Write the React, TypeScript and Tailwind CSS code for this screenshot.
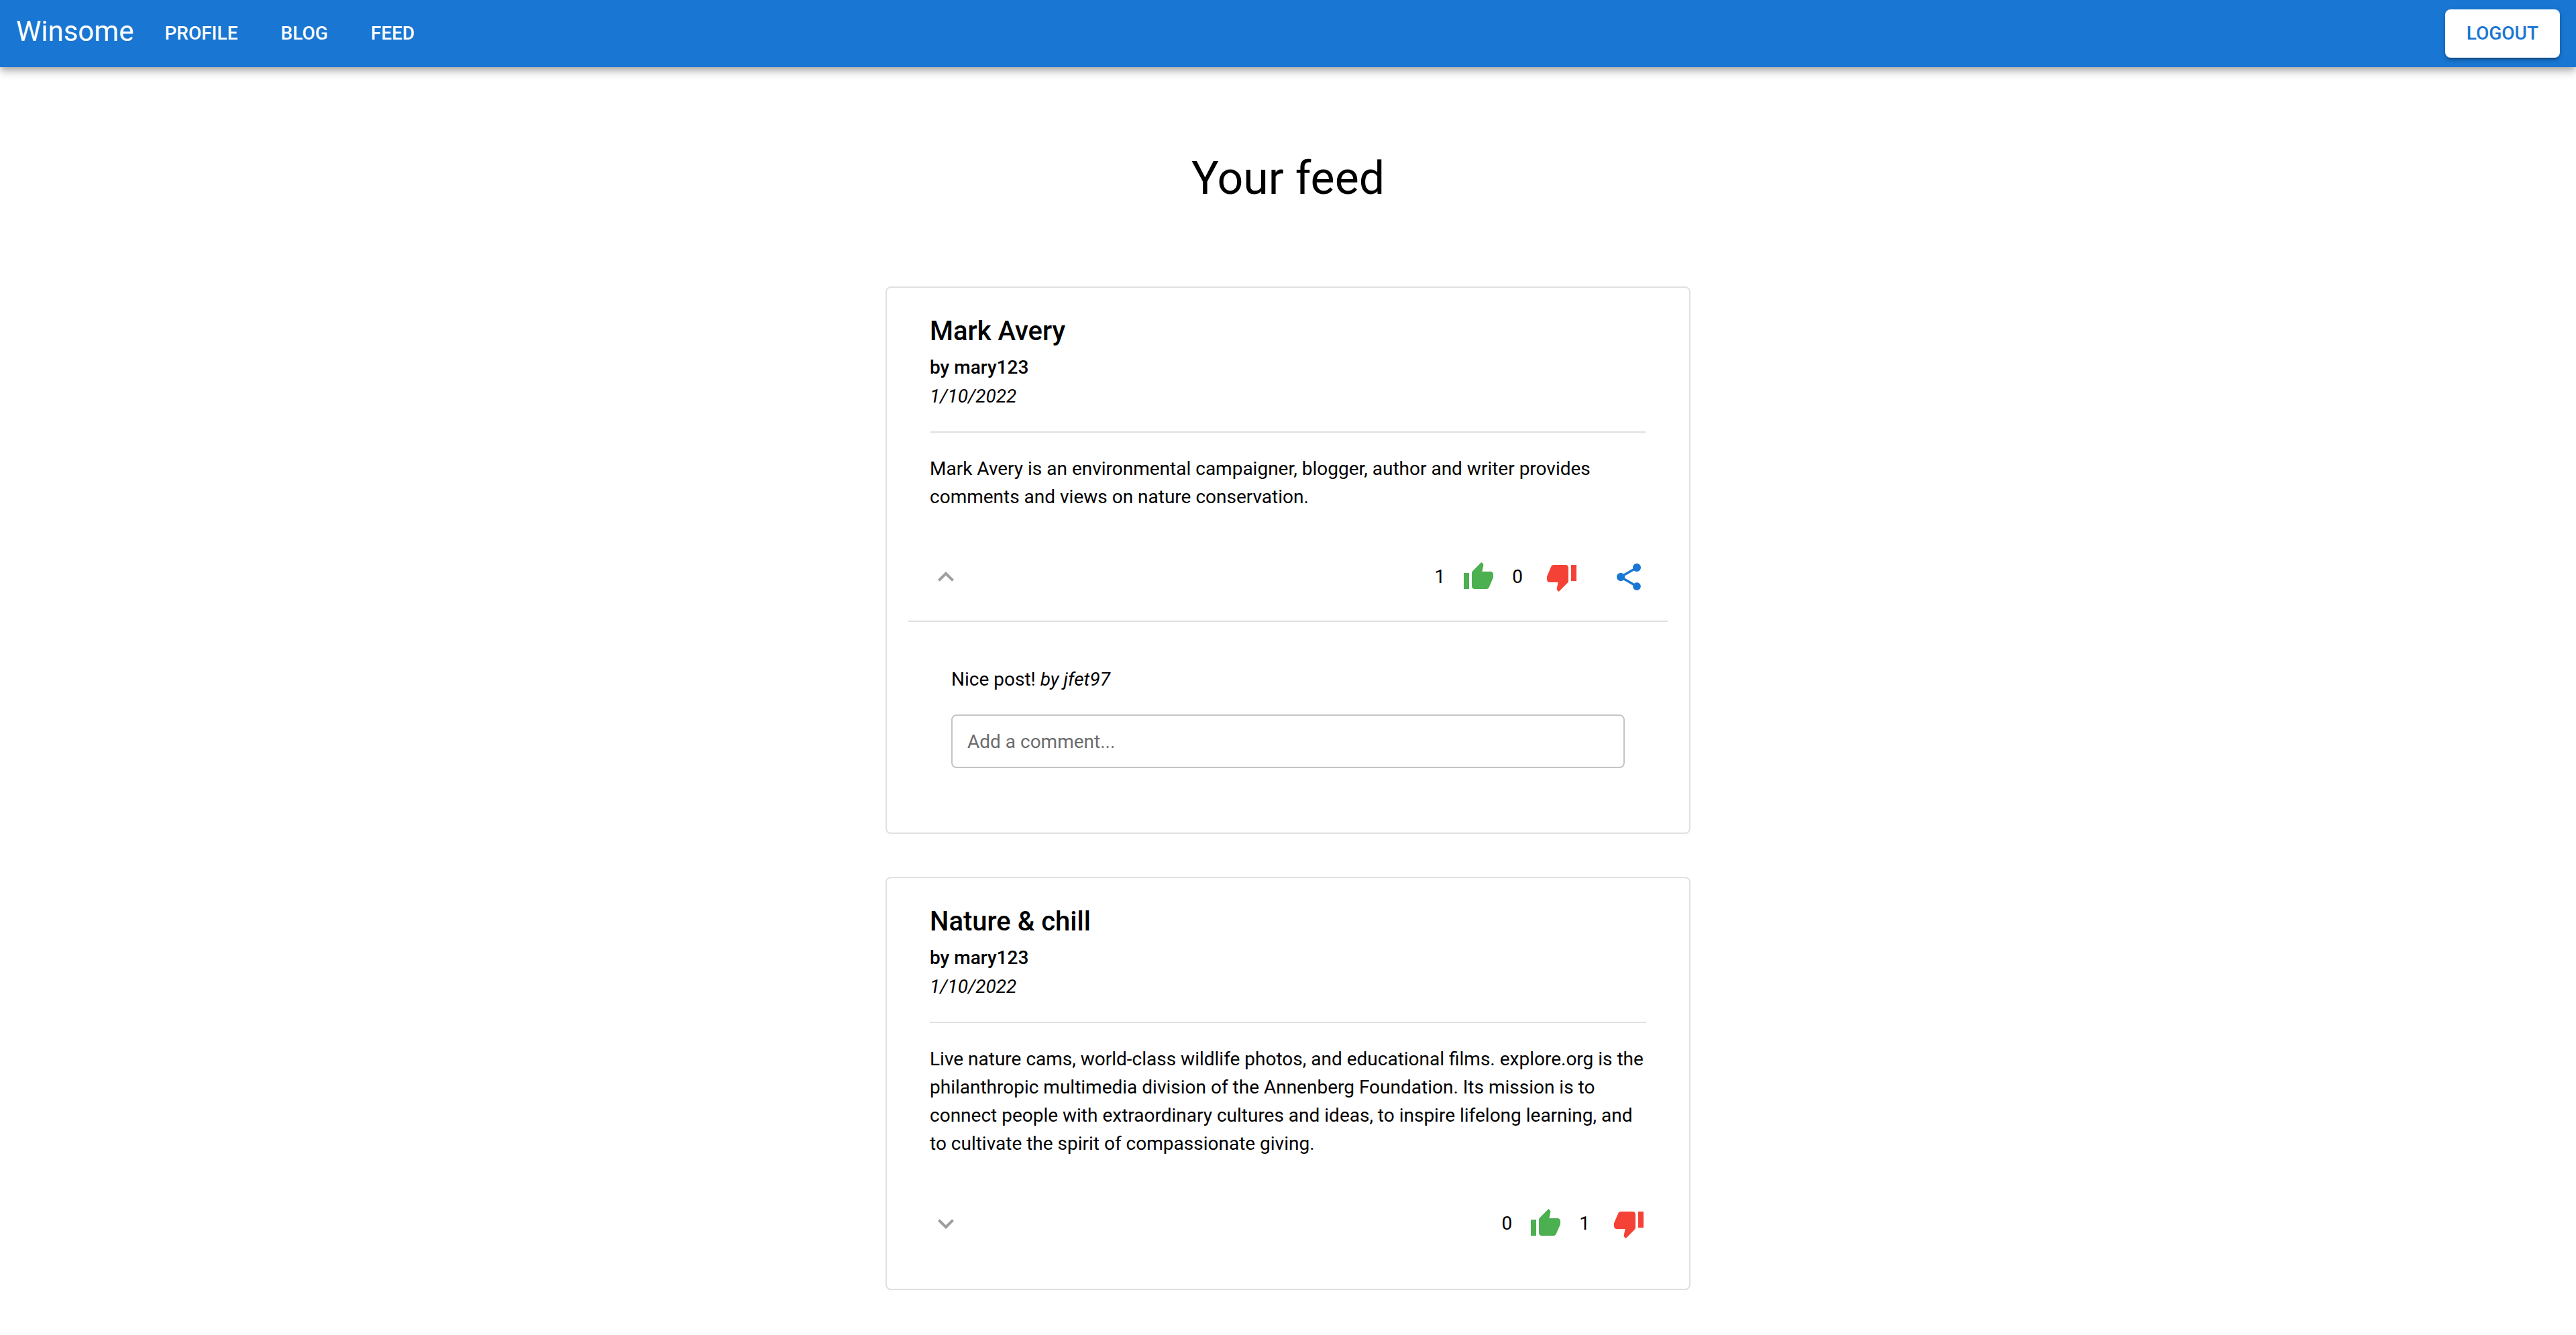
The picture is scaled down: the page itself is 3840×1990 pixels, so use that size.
import { useState } from "react";
import { MdExpandLess, MdExpandMore, MdShare, MdThumbDown, MdThumbUp } from "react-icons/md";

type Comment = { text: string; author: string };

type Post = {
  id: number;
  title: string;
  author: string;
  date: string;
  body: string;
  up: number;
  down: number;
  shareable: boolean;
  expanded: boolean;
  comments: Comment[];
};

const posts: Post[] = [
  {
    id: 1,
    title: "Mark Avery",
    author: "mary123",
    date: "1/10/2022",
    body: "Mark Avery is an environmental campaigner, blogger, author and writer provides comments and views on nature conservation.",
    up: 1,
    down: 0,
    shareable: true,
    expanded: true,
    comments: [{ text: "Nice post!", author: "jfet97" }],
  },
  {
    id: 2,
    title: "Nature & chill",
    author: "mary123",
    date: "1/10/2022",
    body: "Live nature cams, world-class wildlife photos, and educational films. explore.org is the philanthropic multimedia division of the Annenberg Foundation. Its mission is to connect people with extraordinary cultures and ideas, to inspire lifelong learning, and to cultivate the spirit of compassionate giving.",
    up: 0,
    down: 1,
    shareable: false,
    expanded: false,
    comments: [],
  },
];

const links = ["Profile", "Blog", "Feed"];

function NavBar() {
  return (
    <header className="flex items-start bg-[#1976d2] px-6 py-[14px] text-white shadow-[0_4px_8px_-2px_rgba(0,0,0,0.2),0_8px_10px_0_rgba(0,0,0,0.14),0_2px_20px_0_rgba(0,0,0,0.12)]">
      <span className="mr-[14px] text-[42px] leading-[66px]">Winsome</span>
      <nav className="flex grow">
        {links.map((link) => (
          <a
            key={link}
            href={`#${link.toLowerCase()}`}
            className="flex h-[72px] items-center px-8 text-[28px] font-medium uppercase"
          >
            {link}
          </a>
        ))}
      </nav>
      <button
        type="button"
        className="h-[72px] rounded-lg bg-white px-8 text-[28px] font-medium text-[#1976d2] uppercase shadow-[0_6px_2px_-4px_rgba(0,0,0,0.2),0_4px_4px_0_rgba(0,0,0,0.14),0_2px_10px_0_rgba(0,0,0,0.12)]"
      >
        Logout
      </button>
    </header>
  );
}

function PostCard({ post }: { post: Post }) {
  const [open, setOpen] = useState(post.expanded);

  return (
    <article className="rounded-lg border-2 border-[#e0e0e0] px-8 pt-[33px]">
      <div className="px-8">
        <h2 className="text-[40px] leading-[64px] font-medium">{post.title}</h2>
        <p className="leading-[44px] font-medium">by {post.author}</p>
        <p className="italic">{post.date}</p>
        <hr className="mt-[31px] mb-[33px] border-t-2 border-[#e0e0e0]" />
        <p>{post.body}</p>
      </div>

      <div className="mt-[58px] flex items-center pr-[18px] pl-4">
        <button
          type="button"
          aria-expanded={open}
          aria-label={open ? "Hide comments" : "Show comments"}
          onClick={() => setOpen(!open)}
          className="mr-auto p-4 text-[#9e9e9e]"
        >
          {open ? <MdExpandLess className="size-12" /> : <MdExpandMore className="size-12" />}
        </button>
        <span className="mr-[10px]">{post.up}</span>
        <button type="button" aria-label="Upvote" className="mr-[10px] p-4 text-[#4caf50]">
          <MdThumbUp className="size-12" />
        </button>
        <span className="mr-[18px]">{post.down}</span>
        <button type="button" aria-label="Downvote" className="p-4 text-[#f44336]">
          <MdThumbDown className="size-12" />
        </button>
        {post.shareable && (
          <button type="button" aria-label="Share" className="ml-5 p-4 text-[#1976d2]">
            <MdShare className="size-12" />
          </button>
        )}
      </div>

      {open ? (
        <section className="mt-[25px] border-t-2 border-[#e0e0e0] px-16 pt-[65px] pb-24">
          {post.comments.map((comment) => (
            <p key={comment.text}>
              {comment.text} <em>by {comment.author}</em>
            </p>
          ))}
          <input
            type="text"
            aria-label="Add a comment"
            placeholder="Add a comment..."
            className="mt-[31px] block h-20 w-full rounded-lg border-2 border-[#c4c4c4] px-[22px] placeholder:text-[#6c6c6c]"
          />
        </section>
      ) : (
        <div className="h-[57px]" />
      )}
    </article>
  );
}

export default function App() {
  return (
    <div className="min-h-screen bg-white font-[Roboto,sans-serif] text-[28px] leading-[42px] text-black">
      <NavBar />
      <main className="mx-auto max-w-[1200px] pt-[124px] pb-[67px]">
        <h1 className="text-center text-[68px] leading-[84px]">Your feed</h1>
        <div className="mt-[119px] flex flex-col gap-16">
          {posts.map((post) => (
            <PostCard key={post.id} post={post} />
          ))}
        </div>
      </main>
    </div>
  );
}
